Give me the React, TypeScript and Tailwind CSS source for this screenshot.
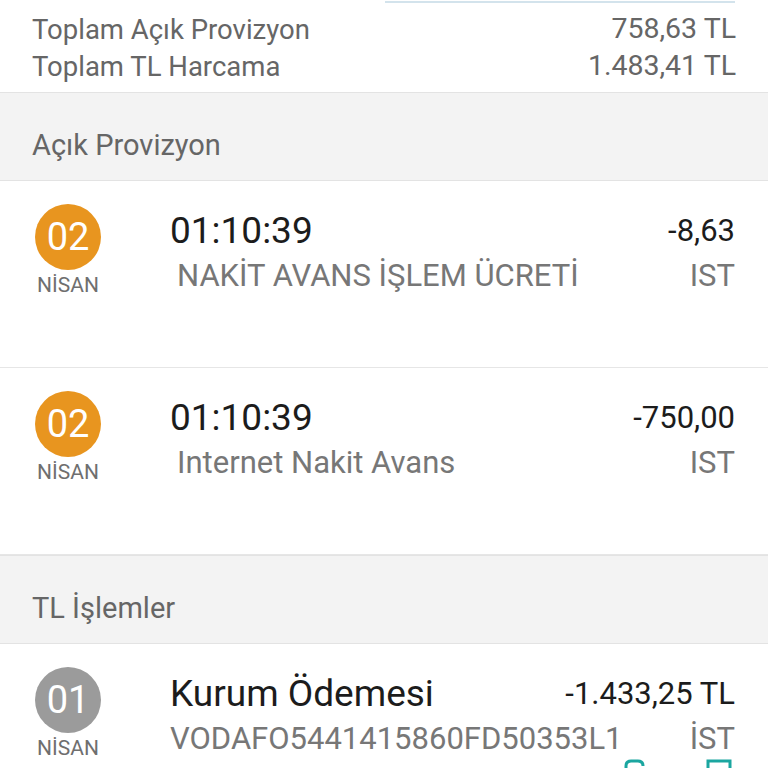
import React from "react";

interface Txn {
    day: string;
    month: string;
    title: string;
    detail: string;
    amount: string;
    city: string;
    color: string;
    indent?: boolean;
}

const acikProvizyon: Txn[] = [
    { day: "02", month: "NİSAN", title: "01:10:39", detail: "NAKİT AVANS İŞLEM ÜCRETİ", amount: "-8,63", city: "IST", color: "bg-[#e8951f]", indent: true },
    { day: "02", month: "NİSAN", title: "01:10:39", detail: "Internet Nakit Avans", amount: "-750,00", city: "IST", color: "bg-[#e8951f]", indent: true },
];

const tlIslemler: Txn[] = [
    { day: "01", month: "NİSAN", title: "Kurum Ödemesi", detail: "VODAFO5441415860FD50353L1", amount: "-1.433,25 TL", city: "İST", color: "bg-[#9b9b9b]" },
];

function SectionHeader({ title }: { title: string }) {
    return (
        <div className="h-[89px] bg-[#f3f3f3] border-y border-[#e3e3e3] flex items-end pl-8 pb-[20px]">
            <span className="text-[29px] text-[#666666] leading-none">{title}</span>
        </div>
    );
}

function TxnRow({ t }: { t: Txn }) {
    return (
        <div className="h-[187px] bg-white border-b border-[#e6e6e6] flex pt-[23px]">
            <div className="w-[136px] flex flex-col items-center shrink-0">
                <div className={`w-[66px] h-[66px] rounded-full ${t.color} flex items-center justify-center`}>
                    <span className="text-white text-[38px] leading-none">{t.day}</span>
                </div>
                <span className="mt-[5px] text-[21px] text-[#6f6f6f] leading-none">{t.month}</span>
            </div>
            <div className="flex-1 flex flex-col pl-[34px] pr-[33px]">
                <div className="flex items-center justify-between h-[34px] mt-[9px]">
                    <span className="text-[37px] text-[#1c1c1c] leading-none">{t.title}</span>
                    <span className="text-[31px] text-[#1c1c1c] leading-none">{t.amount}</span>
                </div>
                <div className="flex items-center justify-between h-[34px] mt-[11px]">
                    <span className={`${t.indent ? "pl-[7px]" : ""} text-[31px] text-[#777777] leading-none`}>{t.detail}</span>
                    <span className="text-[31px] text-[#777777] leading-none">{t.city}</span>
                </div>
            </div>
        </div>
    );
}

export default function App() {
    return (
        <div className="w-[768px] h-[768px] overflow-hidden bg-white" style={{ fontFamily: "Roboto, 'Noto Sans', sans-serif" }}>
            <div className="h-[92px] relative px-8">
                <div className="absolute left-[385px] right-[33px] top-[1px] h-[2px] bg-[#d3e3ec]" />
                <div className="pt-[15px] flex flex-col gap-[8px]">
                    <div className="flex justify-between items-center h-[29px]">
                        <span className="text-[27.5px] text-[#666666] leading-none">Toplam Açık Provizyon</span>
                        <span className="text-[28.5px] text-[#666666] leading-none">758,63 TL</span>
                    </div>
                    <div className="flex justify-between items-center h-[29px]">
                        <span className="text-[27.5px] text-[#666666] leading-none">Toplam TL Harcama</span>
                        <span className="text-[28.5px] text-[#666666] leading-none">1.483,41 TL</span>
                    </div>
                </div>
            </div>
            <SectionHeader title="Açık Provizyon" />
            {acikProvizyon.map((t, i) => (
                <TxnRow key={i} t={t} />
            ))}
            <SectionHeader title="TL İşlemler" />
            <div className="relative">
                {tlIslemler.map((t, i) => (
                    <TxnRow key={i} t={t} />
                ))}
                <svg className="absolute left-[622px] top-[114px]" width="30" height="20" viewBox="0 0 30 20">
                    <path d="M4 20 L4 8 Q4 3 9 3 L16 3 Q21 3 21 8" fill="none" stroke="#1ba6a0" strokeWidth="3" />
                </svg>
                <svg className="absolute left-[704px] top-[114px]" width="30" height="20" viewBox="0 0 30 20">
                    <path d="M4 20 L4 3 L26 3 L26 20" fill="none" stroke="#1ba6a0" strokeWidth="3" />
                </svg>
            </div>
        </div>
    );
}
